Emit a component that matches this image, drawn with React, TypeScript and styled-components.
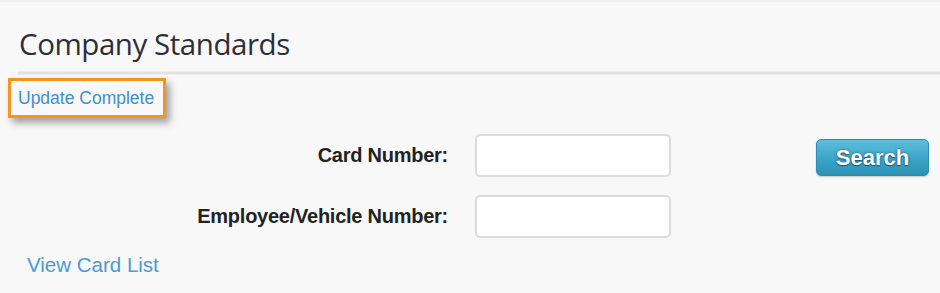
import React from "react";
import styled, { createGlobalStyle } from "styled-components";

const Global = createGlobalStyle`
  html, body { margin: 0; padding: 0; background: #f8f8f8; }
  body { font-family: "Liberation Sans", Arial, sans-serif; }
  #root { min-height: 293px; }
`;

const Page = styled.div`
  width: 940px;
  height: 293px;
  box-sizing: border-box;
  background: #f8f8f8;
  border-top: 2px solid #efefef;
  overflow: hidden;
`;

const Title = styled.h1`
  margin: 22px 0 0 0;
  padding-left: 19px;
  font-family: "Open Sans", "Noto Sans", sans-serif;
  font-weight: 400;
  font-size: 29.5px;
  line-height: 40px;
  letter-spacing: -0.45px;
  color: #2e2e38;
`;

const Divider = styled.div`
  margin: 8px 0 0 18px;
  height: 2px;
  background: #e1e1e1;
  box-shadow: 0 1px 0 #ededed, 0 -1px 0 #efefef;
`;

const Notice = styled.div`
  margin: 4px 0 0 8px;
  width: 158px;
  height: 40px;
  box-sizing: border-box;
  border: 3px solid #f7941d;
  display: flex;
  align-items: center;
  padding-left: 7px;
  box-shadow: 4px 5px 7px rgba(0, 0, 0, 0.35);
`;

const NoticeText = styled.span`
  font-size: 17.5px;
  color: #3f8fcf;
  white-space: nowrap;
`;

const Form = styled.div`
  margin-top: 16px;
  display: grid;
  grid-template-columns: 448px 196px 1fr;
  grid-auto-rows: 43px;
  column-gap: 27px;
  row-gap: 18px;
  padding-right: 11px;
`;

const Label = styled.label`
  align-self: center;
  text-align: right;
  font-weight: 700;
  font-size: 20px;
  letter-spacing: -0.25px;
  color: #222;
  white-space: nowrap;
`;

const Input = styled.input`
  box-sizing: border-box;
  width: 196px;
  height: 43px;
  border: 2px solid #dcdcdc;
  border-radius: 5px;
  background: #fff;
  outline: none;
  font-size: 16px;
  padding: 0 8px;
`;

const SearchButton = styled.button`
  justify-self: end;
  align-self: start;
  margin-top: 5px;
  width: 113px;
  height: 37px;
  box-sizing: border-box;
  border: 1px solid #2b8db0;
  border-radius: 5px;
  background: linear-gradient(#5ebedd, #3aa3c6 55%, #2b92b6);
  box-shadow: 0 1px 2px rgba(0, 0, 0, 0.2);
  color: #fff;
  font-family: "Liberation Sans", Arial, sans-serif;
  font-weight: 700;
  font-size: 22px;
  padding: 0;
  text-shadow: 0 0 2px rgba(10, 60, 90, 0.8), 0 1px 1px rgba(10, 60, 90, 0.6);
  cursor: pointer;
`;

const ListLink = styled.a`
  display: block;
  margin: 15px 0 0 27px;
  font-size: 20.5px;
  line-height: 24px;
  color: #4a9ad6;
  text-decoration: none;
`;

export default function App() {
  return (
    <Page>
      <Global />
      <Title>Company Standards</Title>
      <Divider />
      <Notice>
        <NoticeText>Update Complete</NoticeText>
      </Notice>
      <Form>
        <Label htmlFor="card">Card Number:</Label>
        <Input id="card" type="text" />
        <SearchButton type="button">Search</SearchButton>
        <Label htmlFor="emp">Employee/Vehicle Number:</Label>
        <Input id="emp" type="text" />
      </Form>
      <ListLink href="#">View Card List</ListLink>
    </Page>
  );
}
